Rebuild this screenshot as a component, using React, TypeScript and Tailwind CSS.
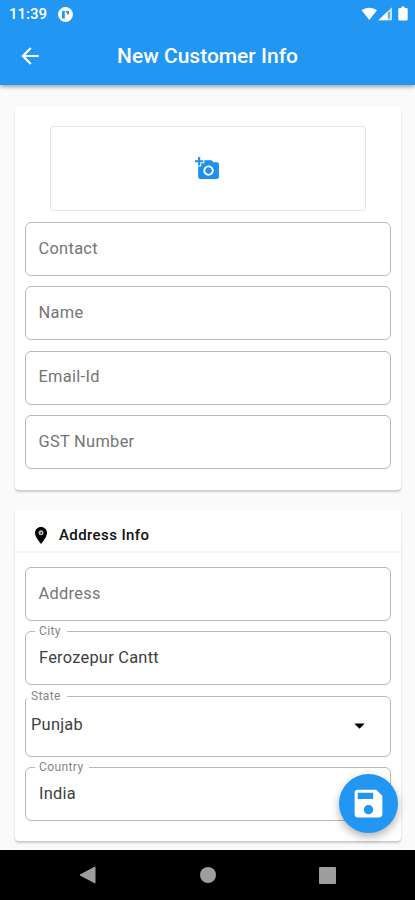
import React from "react";
import {
  MdAddAPhoto,
  MdArrowBack,
  MdArrowDropDown,
  MdSave,
} from "react-icons/md";

interface FieldProps {
  label: string;
  value?: string;
  className?: string;
}

/**
 * Outlined text field. The label sits inside the box when it is empty
 * and floats on the top border (fieldset legend) when there is a value.
 */
function Field({ label, value, className = "" }: FieldProps) {
  if (!value) {
    return (
      <div
        className={`flex h-[54px] items-center rounded-[6px] border border-[#b8b8b8] pl-[12.5px] text-[16.4px] tracking-[0.3px] text-[#757575] ${className}`}
      >
        {label}
      </div>
    );
  }

  return (
    <fieldset
      className={`h-[60px] rounded-[6px] border border-[#b8b8b8] pl-[9px] ${className}`}
    >
      <legend className="h-3 pr-[6px] pl-1 text-[12px] leading-3 tracking-[0.4px] text-[#858585]">
        {label}
      </legend>
      <div className="flex h-[42px] items-center px-1 text-[16.4px] tracking-[0.25px] text-[#404040]">
        {value}
      </div>
    </fieldset>
  );
}

function StatusBar() {
  return (
    <div className="flex h-7 items-center justify-between pr-[6px] pl-[9px]">
      <div className="flex items-center gap-[11px]">
        <span className="text-[15px] font-medium">11:39</span>
        <svg width="15" height="15" viewBox="0 0 15 15">
          <circle cx="7.5" cy="7.5" r="7.4" fill="#fff" />
          <path d="M4 4H6.8V11.5H4Z" fill="#2196f3" />
          <path d="M7.8 4H11V7.6H9V5.6H7.8Z" fill="#2196f3" />
        </svg>
      </div>
      <svg width="48" height="16" viewBox="0 0 48 16" fill="#fff">
        <path d="M0.5 4.2C5 .8 11.5 .8 16 4.2L8.3 14Z" />
        <path d="M17.5 14.2L31 1.2V14.2Z" opacity=".75" />
        <path d="M17.5 14.2L26.5 5.5V14.2Z" />
        <path d="M28 6V12.5" stroke="#2196f3" strokeWidth="1.3" />
        <path d="M40.5 .5h3v1.5h2q1.2 0 1.2 1.2v10q0 1.3-1.2 1.3h-7q-1.2 0-1.2-1.3v-10q0-1.2 1.2-1.2h2z" />
      </svg>
    </div>
  );
}

function AppBar() {
  return (
    <div className="relative flex h-[57px] items-center justify-center">
      <button
        className="absolute top-[15px] left-[17px]"
        aria-label="Back"
      >
        <MdArrowBack size={26} />
      </button>
      <h1 className="text-[21px] font-medium">New Customer Info</h1>
    </div>
  );
}

function NavBar() {
  return (
    <nav className="flex h-[50px] items-center bg-black pl-[79px] text-[#9e9e9e]">
      <svg width="17" height="18" viewBox="0 0 17 18" fill="currentColor">
        <path d="M1 9L16 1V17Z" stroke="currentColor" strokeLinejoin="round" />
      </svg>
      <div className="ml-[104px] h-[16px] w-[16px] rounded-full bg-[#9e9e9e]" />
      <div className="ml-[103px] h-[17px] w-[17px] rounded-[1px] bg-[#9e9e9e]" />
    </nav>
  );
}

const cardClass =
  "mr-[14px] ml-[15px] rounded-[4px] bg-white shadow-[0_2px_2px_rgba(0,0,0,0.18),0_0_2px_rgba(0,0,0,0.06)]";

export default function App() {
  return (
    <div className="relative flex h-[900px] w-[415px] flex-col overflow-hidden bg-[#fafafa] font-['Roboto',sans-serif]">
      <header className="z-10 h-[85px] bg-[#2196f3] text-white shadow-[0_2px_4px_rgba(0,0,0,0.35)]">
        <StatusBar />
        <AppBar />
      </header>

      <main className="flex flex-1 flex-col pt-[21px]">
        {/* Contact details */}
        <section className={`${cardClass} h-[384px] px-[10px] pt-5`}>
          <div className="mx-[25px] flex h-[85px] items-center justify-center rounded-[3px] border border-[#e6e6e6] pr-px text-[#1e90f0]">
            <MdAddAPhoto size={25} />
          </div>
          <div className="mt-[11px] flex flex-col gap-[10.4px]">
            <Field label="Contact" />
            <Field label="Name" />
            <Field label="Email-Id" />
            <Field label="GST Number" />
          </div>
        </section>

        {/* Address details */}
        <section className={`${cardClass} mt-5 h-[331px]`}>
          <div className="flex h-[43px] items-center border-b-2 border-[#f5f5f5] pt-[9px] pl-[20px]">
            <svg width="12" height="17" viewBox="0 0 12 17">
              <path
                d="M6 0C2.6 0 0 2.6 0 6C0 10 6 17 6 17S12 10 12 6C12 2.6 9.4 0 6 0Z"
                fill="#000"
              />
              <circle cx="6" cy="5.8" r="2.5" fill="#bbb" />
              <circle cx="6.2" cy="6" r="0.9" fill="#333" />
            </svg>
            <h2 className="ml-3 text-[15px] font-medium tracking-[0.4px] text-[#111]">
              Address Info
            </h2>
          </div>
          <div className="px-[10px] pt-[14px]">
            <Field label="Address" />
            <Field label="City" value="Ferozepur Cantt" className="mt-1" />
            {/* State dropdown */}
            <fieldset className="mt-[5px] h-[67px] rounded-[6px] border border-[#b8b8b8] pl-px">
              <legend className="h-3 pr-[6px] pl-1 text-[12px] leading-3 tracking-[0.4px] text-[#858585]">
                State
              </legend>
              <div className="flex h-[46px] items-center justify-between pr-[18px] pl-1 text-[16.4px] tracking-[0.25px] text-[#404040]">
                <span>Punjab</span>
                <MdArrowDropDown size={25} className="text-black" />
              </div>
            </fieldset>
            <Field label="Country" value="India" className="mt-1" />
          </div>
        </section>
      </main>

      <NavBar />

      {/* Floating save button */}
      <button
        className="absolute top-[774px] left-[339px] z-20 flex h-[59px] w-[59px] items-center justify-center rounded-full bg-[#2196f3] text-white shadow-[0_4px_8px_rgba(0,0,0,0.3)]"
        aria-label="Save"
      >
        <MdSave size={37} />
      </button>
    </div>
  );
}
